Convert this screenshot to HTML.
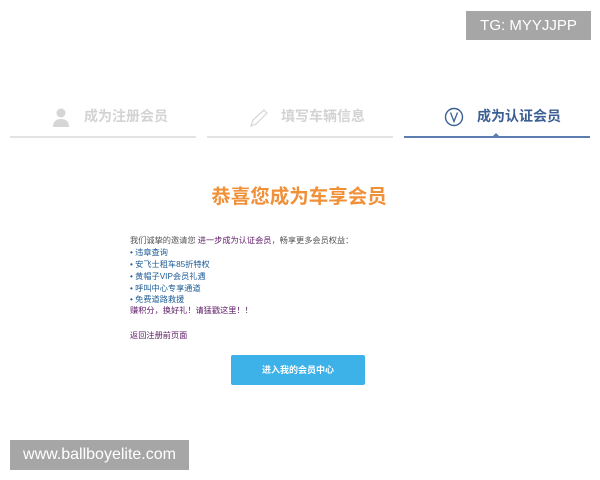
<!DOCTYPE html>
<html><head><meta charset="utf-8"><style>
body{margin:0;width:600px;height:480px;background:#fff;position:relative;overflow:hidden;font-family:"Liberation Sans","Noto Sans CJK SC",sans-serif}
.abs{position:absolute}
.tg{left:466px;top:11px;width:125px;height:29px;background:#a6a6a6;color:#fff;font-size:15px;line-height:29px;text-align:center}
.www{left:10px;top:440px;width:179px;height:30px;background:#a6a6a6;color:#fff;font-size:16px;line-height:30px;text-align:center}
.line{top:136px;height:2px;background:#e3e3e3}
.tab{top:106px;font-size:14px;line-height:20px;color:#d3d3d3;font-weight:bold}
.txt{left:130px;font-size:8.2px;line-height:12px;color:#555;white-space:nowrap}
.b{color:#1e5c96}
.p{color:#5d1a66}
</style></head><body>
<div class="abs tg">TG: MYYJJPP</div>
<div class="abs line" style="left:10px;width:186px"></div>
<div class="abs line" style="left:207px;width:186px"></div>
<div class="abs line" style="left:404px;width:186px;background:#5d7db0"></div>
<div class="abs" style="left:493px;top:133px;width:0;height:0;border-left:3px solid transparent;border-right:3px solid transparent;border-bottom:3px solid #5d7db0"></div>
<svg class="abs" style="left:52px;top:108px" width="18" height="20"><circle cx="9" cy="5" r="4.5" fill="#d6d6d6"/><path d="M1 19 Q1 11 9 11 Q17 11 17 19Z" fill="#d6d6d6"/></svg>
<div class="abs tab" style="left:84px">成为注册会员</div>
<svg class="abs" style="left:249px;top:108px" width="20" height="20"><path d="M2 18 L4 12 L15 2 L18 5 L7 16 Z" fill="none" stroke="#d6d6d6" stroke-width="1.2"/></svg>
<div class="abs tab" style="left:281px">填写车辆信息</div>
<svg class="abs" style="left:444px;top:107px" width="20" height="20"><circle cx="10" cy="10" r="8.5" fill="none" stroke="#3c5f94" stroke-width="1.4"/><path d="M6.5 5.5 L10 14.5 L13.5 5.5" fill="none" stroke="#3c5f94" stroke-width="1.3"/></svg>
<div class="abs tab" style="left:477px;color:#3c5f94">成为认证会员</div>
<div class="abs" style="left:0;width:598px;top:183px;text-align:center;font-size:19.5px;line-height:28px;font-weight:bold;color:#f0913a">恭喜您成为车享会员</div>
<div class="abs txt" style="top:235px">我们诚挚的邀请您 <span class="p">进一步成为认证会员</span>，畅享更多会员权益：</div>
<div class="abs txt b" style="top:247px">• 违章查询</div>
<div class="abs txt b" style="top:259px">• 安飞士租车85折特权</div>
<div class="abs txt b" style="top:271px">• 黄帽子VIP会员礼遇</div>
<div class="abs txt b" style="top:283px">• 呼叫中心专享通道</div>
<div class="abs txt b" style="top:294px">• 免费道路救援</div>
<div class="abs txt p" style="top:305px">赚积分，换好礼！请猛戳这里！！</div>
<div class="abs txt p" style="top:330px">返回注册前页面</div>
<div class="abs" style="left:231px;top:355px;width:134px;height:30px;background:#3db2e9;border-radius:2px;color:#fff;font-size:9px;font-weight:bold;line-height:30px;text-align:center">进入我的会员中心</div>
<div class="abs www">www.ballboyelite.com</div>
</body></html>
